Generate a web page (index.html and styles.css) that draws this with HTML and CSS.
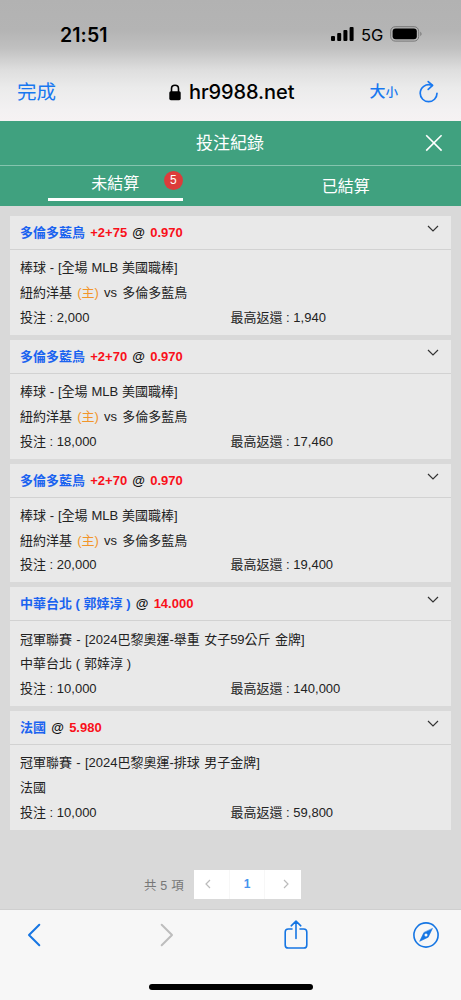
FILE: index.html
```html
<!DOCTYPE html>
<html lang="zh-Hant">
<head>
<meta charset="utf-8">
<title>投注紀錄</title>
<link rel="stylesheet" href="styles.css">
</head>
<body>
<header class="browser">
  <div class="status">
    <span class="time">21:51</span>
    <div class="signals">
      <svg width="24" height="16" viewBox="0 0 24 16"><rect x="1" y="10" width="4" height="5" rx="1"/><rect x="7.2" y="7" width="4" height="8" rx="1"/><rect x="13.4" y="4" width="4" height="11" rx="1"/><rect x="19.6" y="1" width="4" height="14" rx="1"/></svg>
      <span class="network">5G</span>
      <svg width="33" height="16" viewBox="0 0 33 16"><rect x=".7" y=".7" width="28" height="14.4" rx="4.5" fill="none" stroke="#777"/><rect x="2.6" y="2.6" width="24.2" height="10.6" rx="3"/><path d="M30.3 5.5q2.6 2.4 0 4.8z" fill="#777"/></svg>
    </div>
  </div>
  <div class="address">
    <span class="done">完成</span>
    <div class="site">
      <svg width="12" height="17" viewBox="0 0 12 17"><rect x=".3" y="7.2" width="11.4" height="9" rx="1.6"/><path d="M2.5 8V4.7Q2.5 1.3 6 1.3T9.5 4.7V8" fill="none" stroke="#000" stroke-width="1.6"/></svg>
      <span class="domain">hr9988.net</span>
    </div>
    <div class="tools">
      <span class="size"><span class="big">大</span>小</span>
      <svg width="20" height="24" viewBox="0 0 20 24" fill="none" stroke="#1878f0" stroke-width="1.7" stroke-linecap="round" stroke-linejoin="round"><path d="M13.2 5.3C6.6 3.1 1.2 7.6 1.2 13.3a8.3 8.3 0 0 0 16.8 0"/><path d="M9.2 1.6l4.4 3.8-4.4 4"/></svg>
    </div>
  </div>
</header>
<main class="page">
  <div class="title-bar">
    <h1 class="title">投注紀錄</h1>
    <svg class="close" width="18" height="18" viewBox="0 0 18 18" fill="none" stroke="#fff" stroke-width="1.6"><path d="M1.2 1.2l15.4 15.4M16.6 1.2L1.2 16.6"/></svg>
  </div>
  <nav class="tabs">
    <div class="tab"><div class="tab-label active">未結算<span class="badge">5</span></div></div>
    <div class="tab"><div class="tab-label">已結算</div></div>
  </nav>
  <section class="bets">
    <article class="bet">
      <div class="bet-head"><div><span class="team">多倫多藍鳥</span> <span class="red">+2+75</span> <span class="at">@</span> <span class="red">0.970</span></div><svg class="chevron" width="12" height="8" viewBox="0 0 12 8"><path d="M1 1l5 5 5-5"/></svg></div>
      <div class="bet-body"><p>棒球 - [全場 MLB 美國職棒]</p><p class="match">紐約洋基 <span class="home">(主)</span> <span class="vs">vs</span> 多倫多藍鳥</p><div class="amounts"><span>投注 : 2,000</span><span>最高返還 : 1,940</span></div></div>
    </article>
    <article class="bet">
      <div class="bet-head"><div><span class="team">多倫多藍鳥</span> <span class="red">+2+70</span> <span class="at">@</span> <span class="red">0.970</span></div><svg class="chevron" width="12" height="8" viewBox="0 0 12 8"><path d="M1 1l5 5 5-5"/></svg></div>
      <div class="bet-body"><p>棒球 - [全場 MLB 美國職棒]</p><p class="match">紐約洋基 <span class="home">(主)</span> <span class="vs">vs</span> 多倫多藍鳥</p><div class="amounts"><span>投注 : 18,000</span><span>最高返還 : 17,460</span></div></div>
    </article>
    <article class="bet">
      <div class="bet-head"><div><span class="team">多倫多藍鳥</span> <span class="red">+2+70</span> <span class="at">@</span> <span class="red">0.970</span></div><svg class="chevron" width="12" height="8" viewBox="0 0 12 8"><path d="M1 1l5 5 5-5"/></svg></div>
      <div class="bet-body"><p>棒球 - [全場 MLB 美國職棒]</p><p class="match">紐約洋基 <span class="home">(主)</span> <span class="vs">vs</span> 多倫多藍鳥</p><div class="amounts"><span>投注 : 20,000</span><span>最高返還 : 19,400</span></div></div>
    </article>
    <article class="bet">
      <div class="bet-head"><div><span class="team">中華台北 ( 郭婞淳 )</span> <span class="at">@</span> <span class="red">14.000</span></div><svg class="chevron" width="12" height="8" viewBox="0 0 12 8"><path d="M1 1l5 5 5-5"/></svg></div>
      <div class="bet-body"><p class="outright">冠軍聯賽 - [2024巴黎奧運-舉重 女子59公斤 金牌]</p><p>中華台北 ( 郭婞淳 )</p><div class="amounts"><span>投注 : 10,000</span><span>最高返還 : 140,000</span></div></div>
    </article>
    <article class="bet">
      <div class="bet-head"><div><span class="team">法國</span> <span class="at">@</span> <span class="red">5.980</span></div><svg class="chevron" width="12" height="8" viewBox="0 0 12 8"><path d="M1 1l5 5 5-5"/></svg></div>
      <div class="bet-body"><p class="outright">冠軍聯賽 - [2024巴黎奧運-排球 男子金牌]</p><p>法國</p><div class="amounts"><span>投注 : 10,000</span><span>最高返還 : 59,800</span></div></div>
    </article>
  </section>
  <div class="pagination">
    <span class="total">共 5 項</span>
    <div class="pager">
      <span class="page-cell"><svg width="6" height="10" viewBox="0 0 6 10"><path d="M5 1L1 5l4 4"/></svg></span>
      <span class="page-cell current">1</span>
      <span class="page-cell"><svg width="6" height="10" viewBox="0 0 6 10"><path d="M1 1l4 4-4 4"/></svg></span>
    </div>
  </div>
</main>
<footer class="toolbar">
  <div class="actions">
    <svg width="14" height="24" viewBox="0 0 14 24"><path d="M12.3 1.8L2 12l10.3 10.2"/></svg>
    <svg class="disabled" width="14" height="24" viewBox="0 0 14 24"><path d="M1.7 1.8L12 12 1.7 22.2"/></svg>
    <svg class="fine" width="24" height="30" viewBox="0 0 24 30"><path d="M8 9H4.3Q1.2 9 1.2 12.1V24.9Q1.2 28 4.3 28H19.7Q22.8 28 22.8 24.9V12.1Q22.8 9 19.7 9H16M12 18.5V1.3M7.2 5.8L12 1.2l4.8 4.6"/></svg>
    <svg class="fine" width="26" height="26" viewBox="0 0 26 26"><circle cx="13" cy="13" r="12.1"/><path d="M19.3 6.7L15.2 15.2 6.7 19.3 10.8 10.8z" fill="#1676e3" stroke="#1676e3" stroke-width=".6"/><circle cx="13" cy="13" r="1.5" fill="#f7f7f7" stroke="none"/></svg>
  </div>
  <div class="home-bar"></div>
</footer>
</body>
</html>
```
FILE: styles.css
```css
* { box-sizing: border-box; }
body {
  margin: 0;
  width: 461px;
  height: 1000px;
  display: flex;
  flex-direction: column;
  overflow: hidden;
  background: #f7f7f7;
  color: #222;
  font-family: "Liberation Sans", "Noto Sans CJK TC", sans-serif;
}
svg { display: block; flex: none; }
p, h1 { margin: 0; }

.browser {
  height: 121px;
  padding-top: 22px;
  background: linear-gradient(#b2b2b2 0, #b4b4b4 30px, #c0c0c0 48px, #dedede 70px, #ebebeb 88px, #f3f1f2 110px, #f6f2f3 121px);
  color: #000;
}
.status {
  height: 24px;
  padding: 0 38px 0 60px;
  display: flex;
  align-items: center;
  justify-content: space-between;
}
.time { padding-top: 1px; font: 600 19.5px Inter, sans-serif; letter-spacing: 0.1px; }
.signals { display: flex; align-items: center; }
.network { padding-top: 1px; font: 400 16.5px Inter, sans-serif; margin: 0 7px; letter-spacing: -0.2px; }
.address {
  height: 30px;
  margin-top: 31px;
  padding: 0 22px 0 17px;
  display: grid;
  grid-template-columns: 152px 1fr auto;
  align-items: center;
}
.done { color: #1878f0; font-size: 19.5px; line-height: 30px; }
.site { display: flex; align-items: center; gap: 8px; }
.domain { font: 500 20px Inter, sans-serif; letter-spacing: -0.1px; }
.tools { display: flex; align-items: center; gap: 21px; color: #1878f0; }
.size { display: flex; align-items: baseline; font-size: 12.5px; font-weight: 500; line-height: 24px; }
.big { font-size: 16px; }

.page { height: 788px; background: #d9d9d9; }
.title-bar {
  height: 45px;
  padding: 0 18px 0 0;
  display: grid;
  grid-template-columns: 443px 0;
  align-items: center;
  justify-items: center;
  background: #40a17f;
  border-bottom: 1px solid #85c4ae;
  color: #fff;
}
.title { padding: 1px 0 0 17px; font-size: 17px; font-weight: 400; line-height: 43px; }
.close { justify-self: end; }
.tabs { display: grid; grid-template-columns: 1fr 1fr; height: 40px; background: #40a17f; color: #fff; }
.tab { display: flex; justify-content: center; }
.tab-label { position: relative; width: 135px; height: 40px; font-size: 16px; line-height: 41px; text-align: center; }
.active { height: 35px; line-height: 35px; border-bottom: 3px solid #fff; }
.badge {
  position: absolute;
  top: 4.5px;
  right: 0;
  width: 19px;
  height: 19px;
  border-radius: 50%;
  background: #dc3c3b;
  font-size: 12px;
  line-height: 19px;
}

.bets { display: flex; flex-direction: column; gap: 5px; padding: 10px 10px 0; }
.bet { height: 118.8px; background: #e9e9e9; font-size: 13px; }
.bet-head {
  height: 34px;
  padding: 0 12px 0 10px;
  display: flex;
  justify-content: space-between;
  border-bottom: 1px solid #d2d2d2;
  font-weight: 700;
  line-height: 33px;
  word-spacing: 1.6px;
}
.team { color: #1a63f0; word-spacing: 0; }
.red { color: #f9101a; }
.at { color: #111; }
.chevron { margin-top: 9px; fill: none; stroke: #333; stroke-width: 1.2; }
.bet-body { padding: 6.2px 10px 0; line-height: 24.8px; word-spacing: 0.2px; }
.match { word-spacing: 1.6px; }
.outright { word-spacing: 0.7px; }
.home { color: #f2952a; }
.amounts { display: grid; grid-template-columns: 1fr 1fr; word-spacing: 0; }

.pagination { display: flex; align-items: center; padding: 40px 0 0 144px; }
.total { width: 50px; color: #777; font-size: 12.5px; white-space: nowrap; word-spacing: 0.4px; }
.pager { width: 107px; height: 29px; display: grid; grid-template-columns: repeat(3, 1fr); background: #fff; }
.page-cell { display: flex; align-items: center; justify-content: center; border-right: 1px solid #f7f7f7; }
.page-cell:first-child { padding-right: 6px; }
.page-cell:last-child { border: 0; padding-left: 6px; }
.page-cell svg { fill: none; stroke: #bbb; stroke-width: 1.2; }
.current { color: #4694ee; font-size: 12px; font-weight: 700; }

.toolbar { height: 91px; border-top: 1px solid #cfcfcf; background: #f7f7f7; }
.actions {
  height: 49px;
  padding: 0 22px 0 27px;
  display: grid;
  grid-template-columns: 133px 124px 1fr auto;
  align-items: center;
}
.actions svg { fill: none; stroke: #1676e3; stroke-width: 2; stroke-linecap: round; stroke-linejoin: round; }
.actions .fine { stroke-width: 1.6; }
.actions .disabled { stroke: #bdbdbd; }
.home-bar { width: 164px; height: 6px; margin: 25px 0 0 149px; border-radius: 3px; background: #000; }
```
